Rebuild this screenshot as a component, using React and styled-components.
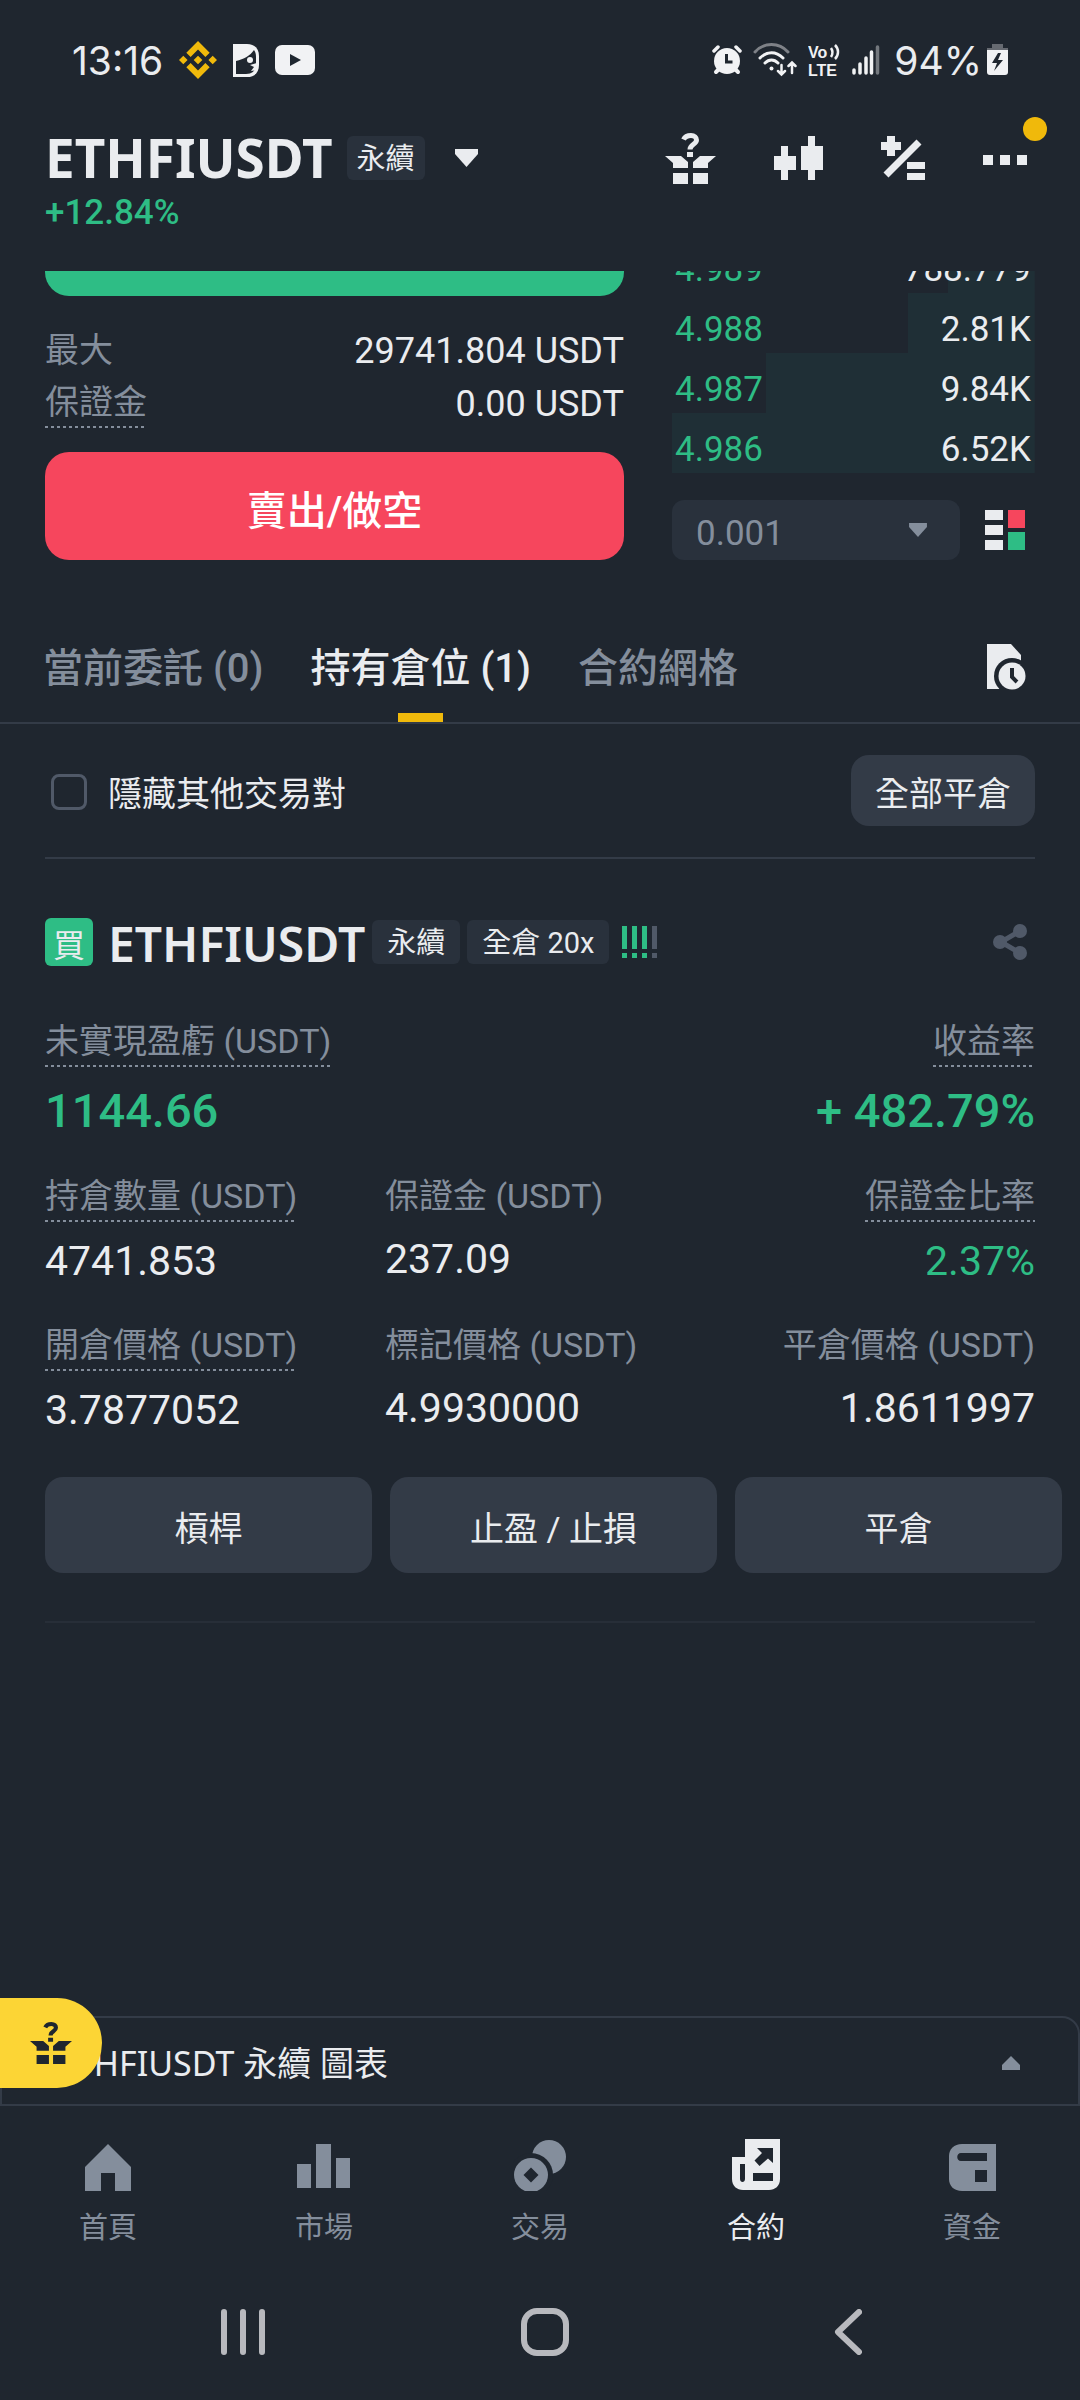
import React, { useState } from 'react';
import styled, { createGlobalStyle, ThemeProvider } from 'styled-components';

const theme = {
    body: '#1f262f',
    text: '#eaecef',
    muted: '#848e9c',
    faint: '#505968',
    line: '#333b47',
    chip: '#29313c',
    button: '#333b47',
    green: '#2ebd85',
    depth: '#1f2f36',
    red: '#f6465d',
    yellow: '#f0b90b',
    brightYellow: '#fcd535',
};

const GlobalStyle = createGlobalStyle`
    * {
        box-sizing: border-box;
    }

    body {
        margin: 0;
        background: ${theme.body};
        color: ${theme.text};
        font-family: Roboto, 'Noto Sans CJK TC', sans-serif;
        font-size: 34px;
    }

    button, select, input {
        font: inherit;
        color: inherit;
        margin: 0;
    }

    button {
        padding: 0;
        border: 0;
        background: none;
        cursor: pointer;
    }

    svg {
        display: block;
        flex: none;
    }
`;

const Screen = styled.div`
    display: flex;
    flex-direction: column;
    min-height: 100vh;
    overflow-x: hidden;
`;

/* ---- ステータスバー ---- */

const StatusBar = styled.div`
    display: flex;
    align-items: center;
    justify-content: space-between;
    height: 120px;
    padding: 0 72px;
    font-family: Inter, sans-serif;
    font-size: 39px;
`;

const StatusGroup = styled.div`
    display: flex;
    align-items: center;
    gap: ${({ $gap }) => $gap}px;
`;

/* ---- ヘッダー ---- */

const Header = styled.header`
    display: flex;
    justify-content: space-between;
    padding: 16px 45px 38px;
`;

const TitleRow = styled.div`
    display: flex;
    align-items: center;
    height: 44px;
`;

const Pair = styled.h1`
    margin: 0 14px 0 0;
    font-family: 'Noto Sans', sans-serif;
    font-size: 53px;
    font-weight: 700;
    line-height: 44px;
`;

const Chip = styled.span`
    padding: 3px ${({ $wide }) => ($wide ? 15 : 10)}px 0;
    border-radius: 6px;
    background: ${({ theme }) => theme.chip};
    font-size: 29px;
    line-height: 41px;
    white-space: nowrap;
`;

const PairMenu = styled.button`
    margin-left: 30px;
`;

const Change = styled.div`
    margin-top: 13px;
    color: ${({ theme }) => theme.green};
    font-size: 35px;
    font-weight: 500;
    line-height: 40px;
`;

const HeaderActions = styled.nav`
    display: flex;
    align-items: center;
    gap: 58px;
    height: 44px;
    padding-right: 8px;
`;

const MoreButton = styled.button`
    position: relative;

    &::after {
        content: '';
        position: absolute;
        top: -34px;
        right: -20px;
        width: 24px;
        height: 24px;
        border-radius: 50%;
        background: ${({ theme }) => theme.yellow};
    }
`;

/* ---- 注文パネル ---- */

const TradeViewport = styled.section`
    overflow: hidden;
`;

// 途中までスクロールした状態
const TradePanel = styled.div`
    display: grid;
    grid-template-columns: minmax(0, 579fr) minmax(0, 363fr);
    gap: 48px;
    margin-top: -83px;
    padding: 0 45px;
`;

const OrderButton = styled.button`
    display: block;
    width: 100%;
    height: 108px;
    padding-top: 4px;
    border-radius: 24px;
    background: ${({ theme, $side }) => ($side === 'buy' ? theme.green : theme.red)};
    color: #fff;
    font-size: 40px;
    font-weight: 500;
`;

const Limits = styled.dl`
    margin: 28px 0 22px;
`;

const LimitRow = styled.div`
    display: flex;
    align-items: center;
    justify-content: space-between;
    height: 53px;

    dd {
        margin: 0;
        font-size: 36px;
    }
`;

const dotted = ({ theme, $dotted }) => $dotted && `
    padding-bottom: 4px;
    background: repeating-linear-gradient(to right, ${theme.muted} 0 3px, transparent 3px 6px) left bottom / 100% 2px no-repeat;
`;

const Label = styled.dt`
    width: fit-content;
    padding-bottom: 2px;
    color: ${({ theme }) => theme.muted};
    line-height: 44px;
    white-space: nowrap;
    ${dotted}
`;

const BookSide = styled.div`
    display: flex;
    flex-direction: column;
    justify-content: flex-end;
`;

const Book = styled.table`
    width: 100%;
    border-collapse: collapse;
    font-size: 35px;

    td {
        height: 60px;
        padding: 13px 4px 0 3px;
        line-height: 47px;
    }

    td:first-child {
        color: ${({ theme }) => theme.green};
    }

    td:last-child {
        text-align: right;
    }
`;

const BookRow = styled.tr`
    background: linear-gradient(to left, ${({ theme, $depth }) => `${theme.depth} ${$depth}%, transparent ${$depth}%`});
`;

const BookTools = styled.div`
    display: flex;
    align-items: center;
    justify-content: space-between;
    margin-top: 27px;
    padding-right: 10px;
`;

const StepBox = styled.div`
    display: grid;
    flex: 1;
    align-items: center;
    max-width: 288px;
    color: ${({ theme }) => theme.muted};

    > * {
        grid-area: 1 / 1;
    }

    svg {
        justify-self: end;
        margin-right: 33px;
        pointer-events: none;
    }
`;

const StepSelect = styled.select`
    height: 60px;
    padding: 6px 24px 0;
    appearance: none;
    border: 0;
    border-radius: 12px;
    background: ${({ theme }) => theme.chip};
    font-size: 35px;
`;

/* ---- タブ ---- */

const TabBar = styled.div`
    display: flex;
    align-items: flex-start;
    justify-content: space-between;
    margin-top: 84px;
    padding: 0 54px 0 43px;
    border-bottom: 2px solid ${({ theme }) => theme.line};
`;

const Tabs = styled.div`
    display: flex;
    gap: 47px;
`;

const Tab = styled.button`
    display: flex;
    flex-direction: column;
    align-items: center;
    gap: 20px;
    padding-top: 1px;
    color: ${({ theme, $active }) => ($active ? theme.text : theme.muted)};
    font-size: 40px;
    font-weight: 500;
    line-height: 48px;
    white-space: nowrap;

    &::after {
        content: '';
        width: 45px;
        height: 9px;
        background: ${({ theme, $active }) => ($active ? theme.yellow : 'transparent')};
    }
`;

/* ---- ポジション ---- */

const Positions = styled.main`
    padding: 0 45px;
`;

const FilterRow = styled.div`
    display: flex;
    align-items: center;
    justify-content: space-between;
    height: 135px;
    border-bottom: 2px solid ${({ theme }) => theme.line};
`;

const CheckLabel = styled.label`
    display: flex;
    align-items: center;
    gap: 21px;
    padding: 2px 0 0 6px;
`;

const Checkbox = styled.input`
    width: 36px;
    height: 36px;
    appearance: none;
    border: 3px solid ${({ theme }) => theme.faint};
    border-radius: 8px;

    &:checked {
        border-color: ${({ theme }) => theme.yellow};
        background: ${({ theme }) => theme.yellow};
    }
`;

const SoftButton = styled.button`
    height: ${({ $tall }) => ($tall ? 96 : 71)}px;
    padding: 2px 24px 0;
    border-radius: 18px;
    background: ${({ theme }) => theme.button};
`;

const PositionCard = styled.article`
    padding: 59px 0 48px;
    border-bottom: 2px solid #272e38;
`;

const PositionHead = styled.div`
    display: flex;
    align-items: center;
    justify-content: space-between;
    padding-right: 8px;
`;

const PositionTitle = styled.div`
    display: flex;
    align-items: center;
    gap: 7px;

    svg {
        margin-left: 6px;
    }
`;

const SideBadge = styled.span`
    width: 48px;
    height: 48px;
    padding-top: 4px;
    border-radius: 6px;
    background: ${({ theme }) => theme.green};
    font-size: 32px;
    line-height: 48px;
    text-align: center;
`;

const PositionName = styled.h2`
    margin: 0 0 0 8px;
    padding-top: 3px;
    font-family: 'Noto Sans', sans-serif;
    font-size: 48px;
    font-weight: 600;
    line-height: 45px;
`;

const Stats = styled.dl`
    display: grid;
    grid-template-columns: 340fr 340fr 310fr;
    row-gap: 38px;
    margin: 53px 0 43px;
`;

const Stat = styled.div`
    display: flex;
    flex-direction: column;
    align-items: ${({ $end }) => ($end ? 'flex-end' : 'flex-start')};
    grid-column: ${({ $span }) => `span ${$span || 1}`};
`;

const StatValue = styled.dd`
    margin: ${({ $big }) => ($big ? 19 : 15)}px 0 0;
    color: ${({ theme, $gain }) => ($gain ? theme.green : theme.text)};
    font-size: ${({ $big }) => ($big ? 47 : 41)}px;
    font-weight: ${({ $big }) => ($big ? 500 : 400)};
    line-height: ${({ $big }) => ($big ? 50 : 48)}px;
`;

const ActionRow = styled.div`
    display: grid;
    grid-template-columns: repeat(3, 1fr);
    gap: 18px;
    margin-right: -27px;
`;

/* ---- 下部 ---- */

const ChartDock = styled.div`
    position: relative;
    margin-top: auto;
`;

const ChartToggle = styled.button`
    display: flex;
    align-items: center;
    justify-content: space-between;
    width: 100%;
    height: 90px;
    padding: 4px 58px 0 54px;
    border: 2px solid ${({ theme }) => theme.line};
    border-radius: 0 18px 0 0;
    font-family: 'Noto Sans', 'Noto Sans CJK TC', sans-serif;
    line-height: 48px;
`;

const GiftPill = styled.button`
    position: absolute;
    top: -18px;
    left: 0;
    display: flex;
    align-items: center;
    justify-content: flex-end;
    width: 102px;
    height: 90px;
    padding-right: 30px;
    border-radius: 0 45px 45px 0;
    background: ${({ theme }) => theme.brightYellow};
    color: ${({ theme }) => theme.body};
`;

const BottomNav = styled.nav`
    display: grid;
    grid-template-columns: repeat(5, 1fr);
    padding: 33px 0 18px;
`;

const NavItem = styled.a`
    display: flex;
    flex-direction: column;
    align-items: center;
    gap: 19px;
    color: ${({ theme, $active }) => ($active ? theme.text : theme.muted)};
    font-size: 29px;
    line-height: 36px;
    text-decoration: none;
`;

const SystemNav = styled.div`
    display: grid;
    grid-template-columns: repeat(3, 1fr);
    align-items: center;
    justify-items: center;
    height: 136px;
    padding: 0 81px 0 92px;
    color: #b8b9be;
`;

/* ---- アイコン ---- */

const CaretDown = ({ width = 23, height = 18 }) => (
    <svg width={width} height={height} viewBox="0 0 23 18" fill="currentColor">
        <path d="M0 0h23v5L11.500 18 0 5z" />
    </svg>
);

const GiftIcon = ({ size = 51 }) => (
    <svg width={size} height={size} viewBox="0 0 51 51">
        <g fill="currentColor">
            <path d="M0 23h16l7 6v6H8v-5zM51 23H35l-7 6v6h15v-5z" />
            <path d="M8 40h15v11H8zM28 40h15v11H28zM22 19h6v5h-6z" />
        </g>
        <path d="M18.500 6.500C20 3.500 23 2.500 26 2.500c3.500 0 5.500 2 5.500 4.500 0 4.500-6.500 4-6.500 9.500" fill="none" stroke="currentColor" strokeWidth="5" />
    </svg>
);

const CandleIcon = () => (
    <svg width="49" height="44" viewBox="0 0 49 44" fill="currentColor">
        <path d="M7 10h7v10h8v14h-8v10H7V34H0V20h7zM34 0h7v10h8v24h-8v10h-7V34h-7V10h7z" />
    </svg>
);

const CalcIcon = () => (
    <svg width="44" height="44" viewBox="0 0 44 44">
        <path d="M6 0h8v6h6v8h-6v6H6v-6H0V6h6zM26 26h18v7H26zM26 37h18v7H26z" fill="currentColor" />
        <path d="M5 39L38 6" stroke="currentColor" strokeWidth="7" />
    </svg>
);

const MoreIcon = () => (
    <svg width="44" height="14" viewBox="0 0 44 14" fill="currentColor">
        <path d="M0 4h10v10H0zM17 4h10v10H17zM34 4h10v10H34z" />
    </svg>
);

const BookLayoutIcon = () => (
    <svg width="40" height="40" viewBox="0 0 40 40">
        <path d="M0 0h18v10H0zM0 15h18v10H0zM0 30h18v10H0z" fill={theme.text} />
        <path d="M23 0h17v18H23z" fill={theme.red} />
        <path d="M23 22h17v18H23z" fill={theme.green} />
    </svg>
);

const HistoryIcon = () => (
    <svg width="39" height="46" viewBox="0 0 39 46">
        <path d="M0 0h24l10 11v12L12 45H0z" fill={theme.text} />
        <circle cx="25" cy="32" r="18" fill={theme.body} />
        <circle cx="25" cy="32" r="13.500" fill={theme.text} />
        <path d="M25 24v9l5 5" fill="none" stroke={theme.body} strokeWidth="4" />
    </svg>
);

const RiskIcon = () => (
    <svg width="36" height="32" viewBox="0 0 36 32">
        <path d="M0 0h5v23H0zM0 27h5v5H0zM10 0h5v23h-5zM10 27h5v5h-5zM20 0h5v23h-5zM20 27h5v5h-5z" fill={theme.green} />
        <path d="M30 0h5v23h-5zM30 27h5v5h-5z" fill={theme.faint} />
    </svg>
);

const ShareIcon = () => (
    <svg width="34" height="36" viewBox="0 0 34 36" fill={theme.faint}>
        <path d="M27 7L8 18l19 11" fill="none" stroke={theme.faint} strokeWidth="5" />
        <circle cx="7" cy="18" r="7" />
        <circle cx="27" cy="7" r="7" />
        <circle cx="27" cy="29" r="7" />
    </svg>
);

const BinanceIcon = () => (
    <svg width="38" height="38" viewBox="0 0 126.61 126.61" fill={theme.yellow}>
        <path d="M38.730 53.200l24.590-24.580 24.600 24.600 14.300-14.310L63.320 0l-38.900 38.900zM0 63.310L14.300 49l14.310 14.310-14.310 14.300zM38.730 73.410L63.320 98l24.600-24.600 14.310 14.290-38.900 38.910-38.910-38.880zM98 63.310L112.300 49l14.310 14.300-14.310 14.320zM77.830 63.300L63.320 48.780 48.810 63.280l14.510 14.500z" />
    </svg>
);

const DogIcon = () => (
    <svg width="26" height="33" viewBox="0 0 26 33">
        <path d="M0 0h14c8 0 12 5 12 12v9c0 7-4 12-12 12H0z" fill="#f1f2f4" />
        <path d="M3 17c8-2 14-5 18-11 2 3 2 5 2 8v8c-1 5-4 8-10 8H3z" fill={theme.body} />
        <circle cx="17" cy="16" r="3" fill="#f1f2f4" />
        <path d="M24 19l-7 2 4 2-3 4 6-1z" fill="#f1f2f4" />
    </svg>
);

const VideoIcon = () => (
    <svg width="40" height="30" viewBox="0 0 40 30">
        <rect width="40" height="30" rx="7" fill="#f1f2f4" />
        <path d="M15 9l11 6-11 6z" fill={theme.body} />
    </svg>
);

const AlarmIcon = () => (
    <svg width="30" height="30" viewBox="0 0 30 30" stroke="#f1f2f4" strokeLinecap="round">
        <path d="M2 6l4-4M28 6l-4-4" strokeWidth="3.500" />
        <path d="M4 27l4-4M26 27l-4-4" strokeWidth="4" />
        <circle cx="15" cy="16" r="13" fill="#f1f2f4" stroke="none" />
        <path d="M14.500 9v8h6" fill="none" stroke={theme.body} strokeWidth="3" strokeLinecap="butt" />
    </svg>
);

const WifiIcon = () => (
    <svg width="44" height="34" viewBox="0 0 44 34" fill="none" stroke="#f1f2f4" strokeLinecap="round" strokeWidth="3">
        <path d="M2 9c9-10 24-10 33 0" opacity="0.45" />
        <path d="M7 15c7-7 16-7 23 0M12 20c4-4 9-4 13 0" />
        <circle cx="18.500" cy="25.500" r="2" fill="#f1f2f4" stroke="none" />
        <path d="M28.500 22v9M25 28l3.500 3.500L32 28M39 30V20M35.500 23l3.500-3.500 3.500 3.500" strokeWidth="2.500" />
    </svg>
);

const VolteIcon = () => (
    <svg width="33" height="40" viewBox="0 0 33 40" fill="#f1f2f4">
        <g fontFamily="Liberation Sans" fontSize="16" fontWeight="700">
            <text x="0" y="18">Vo</text>
            <text x="0" y="36">LTE</text>
        </g>
        <path d="M23 8c2 3 2 6 0 9M27 5c4 4 4 10 0 14" fill="none" stroke="#f1f2f4" strokeWidth="2.500" />
    </svg>
);

const SignalIcon = () => (
    <svg width="28" height="30" viewBox="0 0 28 30" stroke="#f1f2f4" strokeWidth="3.500" strokeLinecap="round">
        <path d="M2 25v3M8 19v9M14 13v15M19.500 7v21" />
        <path d="M25.500 2v26" opacity="0.4" />
    </svg>
);

const BatteryIcon = () => (
    <svg width="21" height="32" viewBox="0 0 21 32">
        <path d="M5 0h11v4h5v4H0V4h5z" fill="#666a71" />
        <path d="M0 6h21v22c0 2-1 3-3 3H3c-2 0-3-1-3-3z" fill="#f1f2f4" />
        <path d="M11 9L5 19h5L7 27l9-11h-5l3-7z" fill={theme.body} />
    </svg>
);

const HomeIcon = () => (
    <path d="M27 5l23 23v24H34V34H20v18H4V28z" />
);

const MarketIcon = () => (
    <path d="M0 25h14v24H0zM19 5h15v44H19zM39 19h14v30H39z" />
);

const TradeIcon = () => (
    <>
        <circle cx="36" cy="18" r="17" />
        <circle cx="18" cy="36" r="22" fill={theme.body} />
        <circle cx="18" cy="36" r="17" />
        <path d="M18 28.500l7.500 7.500-7.500 7.500-7.500-7.500z" fill={theme.body} />
    </>
);

const FuturesIcon = () => (
    <>
        <path d="M16 0h35v40c0 7-5 11-11 11H14C8 51 3 47 3 40V18h13z" />
        <path d="M11 25h5v15c0 4-5 4-5 0zM24 34h20v8H24zM28 9h16v15l-5-4.500-8.500 7.500-5-5.500L33 14z" fill={theme.body} />
    </>
);

const WalletIcon = () => (
    <>
        <path d="M17 5h34v47H17C9 52 4 47 4 40V17C4 10 9 5 17 5z" />
        <path d="M16 14h26v8H16c-5 0-5-8 0-8zM30 31h12v12H30z" fill={theme.body} />
    </>
);

/* ---- データ ---- */

const bids = [
    { price: '4.989', amount: '788.779', depth: 24 },
    { price: '4.988', amount: '2.81K', depth: 35 },
    { price: '4.987', amount: '9.84K', depth: 74 },
    { price: '4.986', amount: '6.52K', depth: 100 },
];

const tabs = ['當前委託 (0)', '持有倉位 (1)', '合約網格'];

const stats = [
    { label: '未實現盈虧 (USDT)', value: '1144.66', dotted: true, big: true, gain: true, span: 2 },
    { label: '收益率', value: '+ 482.79%', dotted: true, big: true, gain: true, end: true },
    { label: '持倉數量 (USDT)', value: '4741.853', dotted: true },
    { label: '保證金 (USDT)', value: '237.09' },
    { label: '保證金比率', value: '2.37%', dotted: true, gain: true, end: true },
    { label: '開倉價格 (USDT)', value: '3.7877052', dotted: true },
    { label: '標記價格 (USDT)', value: '4.9930000' },
    { label: '平倉價格 (USDT)', value: '1.8611997', end: true },
];

const navItems = [
    { label: '首頁', Icon: HomeIcon },
    { label: '市場', Icon: MarketIcon },
    { label: '交易', Icon: TradeIcon },
    { label: '合約', Icon: FuturesIcon },
    { label: '資金', Icon: WalletIcon },
];

const App = () => {
    const [activeTab, setActiveTab] = useState(1);
    const [hideOthers, setHideOthers] = useState(false);

    return (
        <ThemeProvider theme={theme}>
            <GlobalStyle />
            <Screen>
                <StatusBar>
                    <StatusGroup $gap={16}>
                        <span>13:16</span>
                        <BinanceIcon />
                        <DogIcon />
                        <VideoIcon />
                    </StatusGroup>
                    <StatusGroup $gap={14}>
                        <StatusGroup $gap={11}>
                            <AlarmIcon />
                            <WifiIcon />
                            <VolteIcon />
                            <SignalIcon />
                        </StatusGroup>
                        <StatusGroup $gap={5}>
                            <span>94%</span>
                            <BatteryIcon />
                        </StatusGroup>
                    </StatusGroup>
                </StatusBar>

                <Header>
                    <div>
                        <TitleRow>
                            <Pair>ETHFIUSDT</Pair>
                            <Chip>永續</Chip>
                            <PairMenu aria-label="選擇交易對"><CaretDown /></PairMenu>
                        </TitleRow>
                        <Change>+12.84%</Change>
                    </div>
                    <HeaderActions>
                        <button aria-label="獎勵"><GiftIcon /></button>
                        <button aria-label="K線"><CandleIcon /></button>
                        <button aria-label="計算機"><CalcIcon /></button>
                        <MoreButton aria-label="更多"><MoreIcon /></MoreButton>
                    </HeaderActions>
                </Header>

                <TradeViewport>
                    <TradePanel>
                        <div>
                            <OrderButton $side="buy" aria-label="買入/做多" />
                            <Limits>
                                <LimitRow>
                                    <Label>最大</Label>
                                    <dd>29741.804 USDT</dd>
                                </LimitRow>
                                <LimitRow>
                                    <Label $dotted>保證金</Label>
                                    <dd>0.00 USDT</dd>
                                </LimitRow>
                            </Limits>
                            <OrderButton $side="sell">賣出/做空</OrderButton>
                        </div>
                        <BookSide>
                            <Book>
                                <tbody>
                                    {bids.map((bid) => (
                                        <BookRow key={bid.price} $depth={bid.depth}>
                                            <td>{bid.price}</td>
                                            <td>{bid.amount}</td>
                                        </BookRow>
                                    ))}
                                </tbody>
                            </Book>
                            <BookTools>
                                <StepBox>
                                    <StepSelect aria-label="深度" defaultValue="0.001">
                                        <option>0.001</option>
                                        <option>0.01</option>
                                    </StepSelect>
                                    <CaretDown width={18} height={14} />
                                </StepBox>
                                <button aria-label="訂單簿樣式"><BookLayoutIcon /></button>
                            </BookTools>
                        </BookSide>
                    </TradePanel>
                </TradeViewport>

                <TabBar>
                    <Tabs role="tablist">
                        {tabs.map((tab, i) => (
                            <Tab key={tab} role="tab" aria-selected={i === activeTab} $active={i === activeTab} onClick={() => setActiveTab(i)}>
                                {tab}
                            </Tab>
                        ))}
                    </Tabs>
                    <button aria-label="歷史記錄"><HistoryIcon /></button>
                </TabBar>

                <Positions>
                    <FilterRow>
                        <CheckLabel>
                            <Checkbox type="checkbox" checked={hideOthers} onChange={(e) => setHideOthers(e.target.checked)} />
                            隱藏其他交易對
                        </CheckLabel>
                        <SoftButton>全部平倉</SoftButton>
                    </FilterRow>

                    <PositionCard>
                        <PositionHead>
                            <PositionTitle>
                                <SideBadge>買</SideBadge>
                                <PositionName>ETHFIUSDT</PositionName>
                                <Chip $wide>永續</Chip>
                                <Chip $wide>全倉 20x</Chip>
                                <RiskIcon />
                            </PositionTitle>
                            <button aria-label="分享"><ShareIcon /></button>
                        </PositionHead>
                        <Stats>
                            {stats.map((s) => (
                                <Stat key={s.label} $end={s.end} $span={s.span}>
                                    <Label $dotted={s.dotted}>{s.label}</Label>
                                    <StatValue $big={s.big} $gain={s.gain}>{s.value}</StatValue>
                                </Stat>
                            ))}
                        </Stats>
                        <ActionRow>
                            <SoftButton $tall>槓桿</SoftButton>
                            <SoftButton $tall>止盈 / 止損</SoftButton>
                            <SoftButton $tall>平倉</SoftButton>
                        </ActionRow>
                    </PositionCard>
                </Positions>

                <ChartDock>
                    <ChartToggle>
                        ETHFIUSDT 永續 圖表
                        <svg width="18" height="14" viewBox="0 0 18 14" fill={theme.muted}>
                            <path d="M9 0l9 9v5H0V9z" />
                        </svg>
                    </ChartToggle>
                    <GiftPill aria-label="獎勵"><GiftIcon size={42} /></GiftPill>
                </ChartDock>

                <BottomNav>
                    {navItems.map(({ label, Icon }) => (
                        <NavItem key={label} href="#" $active={label === '合約'}>
                            <svg width="54" height="52" viewBox="0 0 54 52" fill="currentColor"><Icon /></svg>
                            {label}
                        </NavItem>
                    ))}
                </BottomNav>

                <SystemNav>
                    <button aria-label="最近">
                        <svg width="44" height="46" viewBox="0 0 44 46" stroke="currentColor" strokeWidth="6" strokeLinecap="round">
                            <path d="M3 3v40M22 3v40M41 3v40" />
                        </svg>
                    </button>
                    <button aria-label="主畫面">
                        <svg width="48" height="48" viewBox="0 0 48 48" fill="none" stroke="currentColor" strokeWidth="6">
                            <rect x="3" y="3" width="42" height="42" rx="13" />
                        </svg>
                    </button>
                    <button aria-label="返回">
                        <svg width="28" height="46" viewBox="0 0 28 46" fill="none" stroke="currentColor" strokeWidth="6" strokeLinecap="round" strokeLinejoin="round">
                            <path d="M25 3L4 23l21 20" />
                        </svg>
                    </button>
                </SystemNav>
            </Screen>
        </ThemeProvider>
    );
};

export default App;
